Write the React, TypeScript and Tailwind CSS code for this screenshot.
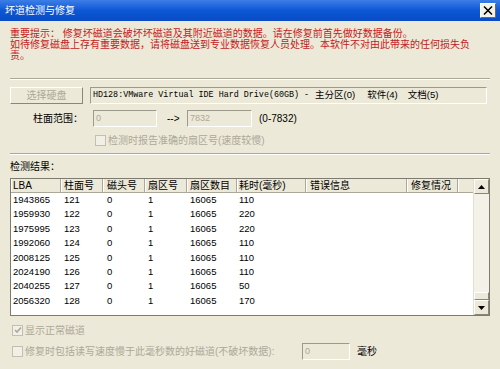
import React from "react";

const cols = [
  { label: "LBA", w: "w-[50px] pl-[2px]" },
  { label: "柱面号", w: "w-[42px] pl-[3px]" },
  { label: "磁头号", w: "w-[42px] pl-[4px]" },
  { label: "扇区号", w: "w-[42px] pl-[3px]" },
  { label: "扇区数目", w: "w-[50px] pl-[3px]" },
  { label: "耗时(毫秒)", w: "w-[69px] pl-[2px]" },
  { label: "错误信息", w: "w-[101px] pl-[4px]" },
  { label: "修复情况", w: "w-[51px] pl-[4px]" },
];

const rows = [
  ["1943865", "121", "0", "1", "16065", "110"],
  ["1959930", "122", "0", "1", "16065", "220"],
  ["1975995", "123", "0", "1", "16065", "220"],
  ["1992060", "124", "0", "1", "16065", "110"],
  ["2008125", "125", "0", "1", "16065", "110"],
  ["2024190", "126", "0", "1", "16065", "110"],
  ["2040255", "127", "0", "1", "16065", "50"],
  ["2056320", "128", "0", "1", "16065", "170"],
];

function Sep() {
  return <div className="h-[2px] border-t border-t-[#aca899] border-b border-b-white" />;
}

function Check({ checked }: { checked?: boolean }) {
  return (
    <span className="w-[11px] h-[11px] shrink-0 flex items-center justify-center border border-[#c2bfb1] bg-[#f1efe6]">
      {checked && (
        <svg width="8" height="8" viewBox="0 0 8 8">
          <path d="M1 4 L3 6 L7 1.5" stroke="#aca899" strokeWidth="1.6" fill="none" />
        </svg>
      )}
    </span>
  );
}

function Sunken({ className, children }: { className?: string; children?: React.ReactNode }) {
  return (
    <div
      className={
        "border border-t-[#9d9a8c] border-l-[#9d9a8c] border-b-white border-r-white bg-[#ece9d8] flex items-center " +
        (className ?? "")
      }
    >
      {children}
    </div>
  );
}

function Raised({ className, children }: { className?: string; children?: React.ReactNode }) {
  return (
    <div
      className={
        "border border-t-white border-l-white border-b-[#8a877a] border-r-[#8a877a] bg-[#ece9d8] flex items-center justify-center " +
        (className ?? "")
      }
    >
      {children}
    </div>
  );
}

function ScrollBar() {
  return (
    <div className="w-[16px] flex flex-col bg-[#f3f1e8] border-l border-[#e2dfd0]">
      <Raised className="h-[15px]">
        <svg width="7" height="4" viewBox="0 0 7 4">
          <path d="M3.5 0 L7 4 L0 4 Z" fill="#000" />
        </svg>
      </Raised>
      <div className="flex-1" />
      <Raised className="h-[8px]" />
      <Raised className="h-[15px]">
        <svg width="7" height="4" viewBox="0 0 7 4">
          <path d="M0 0 L7 0 L3.5 4 Z" fill="#000" />
        </svg>
      </Raised>
    </div>
  );
}

export default function App() {
  return (
    <div className="w-[500px] h-[369px] overflow-hidden bg-[#ece9d8] flex flex-col text-black font-['Liberation_Sans','Noto_Sans_CJK_SC',sans-serif]">
      {/* title bar */}
      <div className="h-[21px] shrink-0 flex items-center justify-between pl-[5px] pr-[4px] bg-linear-to-b from-[#3b7ee6] via-[#0c57d6] to-[#0a4bc4]">
        <span className="text-white text-[10px] leading-none">坏道检测与修复</span>
        <div className="w-[16px] h-[15px] flex items-center justify-center bg-[#f2f1ea] border border-t-white border-l-white border-b-[#6b6a62] border-r-[#6b6a62]">
          <svg width="10" height="9" viewBox="0 0 10 9">
            <path d="M1 0.5 L9 8.5 M9 0.5 L1 8.5" stroke="#000" strokeWidth="1.5" />
          </svg>
        </div>
      </div>

      <div className="px-[10px] flex flex-col">
        <div className="mt-[7px] text-[10px] leading-[11px] text-[#c41a22] whitespace-nowrap">
          <div>重要提示： 修复坏磁道会破坏坏磁道及其附近磁道的数据。请在修复前首先做好数据备份。</div>
          <div>如待修复磁盘上存有重要数据，请将磁盘送到专业数据恢复人员处理。本软件不对由此带来的任何损失负</div>
          <div>责。</div>
        </div>

        <div className="mt-[17px]">
          <Sep />
        </div>

        {/* drive row */}
        <div className="mt-[7px] flex items-center">
          <Raised className="w-[73px] h-[17px]">
            <span className="text-[10px] text-[#aca899] leading-none">选择硬盘</span>
          </Raised>
          <Sunken className="ml-[7px] mr-[3px] flex-1 h-[17px] pl-[2px] whitespace-nowrap">
            <span className="w-[222px] shrink-0 font-['Liberation_Mono',monospace] text-[8.4px]">
              HD128:VMware Virtual IDE Hard Drive(60GB) -
            </span>
            <span className="text-[9.5px]">主分区(0)</span>
            <span className="ml-[12px] text-[9.5px]">软件(4)</span>
            <span className="ml-[10px] text-[9.5px]">文档(5)</span>
          </Sunken>
        </div>

        {/* cylinder range */}
        <div className="mt-[6px] flex items-center text-[10px]">
          <span className="ml-[23px] w-[60px]">柱面范围：</span>
          <Sunken className="w-[64px] h-[17px] pl-[2px] text-[9px] text-[#aca899]">0</Sunken>
          <span className="ml-[10px] w-[20px]">--&gt;</span>
          <Sunken className="w-[65px] h-[17px] pl-[2px] text-[9px] text-[#aca899]">7832</Sunken>
          <span className="ml-[7px]">(0-7832)</span>
        </div>

        <div className="mt-[7px] h-[12px] flex items-center text-[10px] text-[#aca899]">
          <span className="ml-[85px]" />
          <Check />
          <span className="ml-[2px]">检测时报告准确的扇区号(速度较慢)</span>
        </div>

        <div className="mt-[7px]">
          <Sep />
        </div>

        <div className="mt-[6px] h-[11px] flex items-center text-[10px]">检测结果：</div>

        {/* result list */}
        <div className="mt-[6px] h-[138px] flex border border-[#7d7b6f] bg-white">
          <div className="flex-1 flex flex-col">
            <div className="h-[14px] flex bg-[#ece9d8] border-b border-[#aca899] text-[10px]">
              {cols.map((c) => (
                <div
                  key={c.label}
                  className={c.w + " h-full flex items-center border-r border-r-[#aca899] shadow-[inset_1px_0_0_#fff] whitespace-nowrap"}
                >
                  {c.label}
                </div>
              ))}
              <div className="flex-1 shadow-[inset_1px_0_0_#fff]" />
            </div>
            <div className="flex-1 flex flex-col text-[9.5px]">
              {rows.map((r) => (
                <div key={r[0]} className="h-[14.4px] flex items-center">
                  {r.map((v, i) => (
                    <div key={i} className={cols[i].w}>
                      {v}
                    </div>
                  ))}
                </div>
              ))}
            </div>
          </div>
          <ScrollBar />
        </div>

        <div className="mt-[8px] h-[12px] flex items-center text-[10px] text-[#aca899]">
          <span className="ml-[2px]" />
          <Check checked />
          <span className="ml-[2px]">显示正常磁道</span>
        </div>

        <div className="mt-[7px] h-[17px] flex items-center text-[10px]">
          <span className="ml-[2px]" />
          <Check />
          <span className="ml-[2px] w-[277px] text-[#aca899] whitespace-nowrap">
            修复时包括读写速度慢于此毫秒数的好磁道(不破坏数据):
          </span>
          <Sunken className="w-[48px] h-[17px] pl-[2px] text-[9px] text-[#aca899]">0</Sunken>
          <span className="ml-[7px]">毫秒</span>
        </div>
      </div>
    </div>
  );
}
